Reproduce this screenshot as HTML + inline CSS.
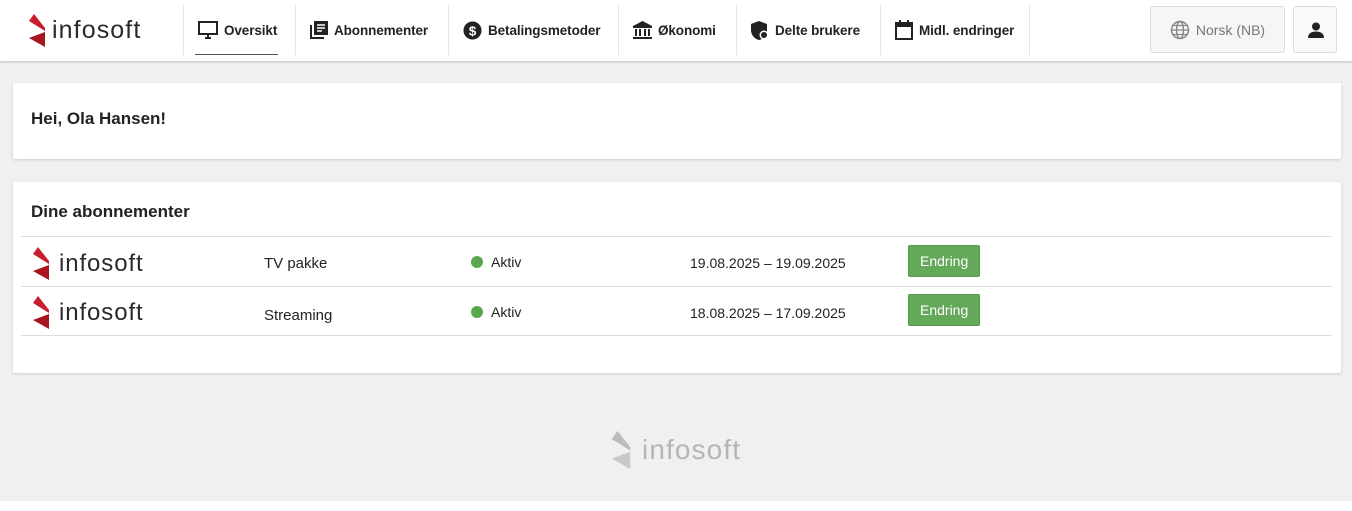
<!DOCTYPE html>
<html><head><meta charset="utf-8"><style>
*{box-sizing:border-box;margin:0;padding:0}
body{width:1352px;height:511px;background:#f0f0f0;font-family:"Liberation Sans",sans-serif;color:#222;position:relative;overflow:hidden}
.top{position:absolute;left:0;top:0;width:1352px;height:61px;background:#fff;box-shadow:0 1px 3px rgba(0,0,0,.2)}
.logo{position:absolute;display:flex;align-items:center}
.logo span{font-size:25px;color:#2a2a2a;margin-left:6px;letter-spacing:1.1px}
.nav{position:absolute;left:183px;top:5px;height:50px;display:flex}
.nav div{display:flex;align-items:center;padding-left:14px;border-right:1px solid #e6e6e6;font-size:13.5px;font-weight:bold;color:#222;height:50px;letter-spacing:-.1px;white-space:nowrap;overflow:hidden}
.nav div:first-child{border-left:1px solid #e6e6e6}
.nav svg{margin-right:6px;flex:none}
.card{position:absolute;left:13px;width:1328px;background:#fff;box-shadow:0 1px 3px rgba(0,0,0,.15);border-radius:2px}
.row{position:absolute;left:8px;width:1311px;height:50px;border-top:1px solid #ddd;font-size:15px}
.row>*{position:absolute}
.btn{background:#64a85a;color:#fff;font-size:14px;padding:7px 11px;border-radius:2px;border:1px solid #5a9a50}
.dot{width:12px;height:12px;border-radius:50%;background:#5aa74f;display:inline-block;margin-right:8px;vertical-align:-1px}
h2{position:absolute;left:18px;font-size:17px;font-weight:bold;color:#222}
</style></head><body>
<div class="top">
 <div class="logo" style="left:28px;top:14px"><svg width="18" height="33" viewBox="0 0 18 33"><path d="M1 7 L6 0 L17 14 L17 17 Z" fill="#c81e2b"/><path d="M1 24 L17 18 L17 33 Z" fill="#a8141f"/></svg><span>infosoft</span></div>
 <div class="nav">
  <div style="position:relative;width:113px"><svg width="20" height="18" viewBox="0 0 20 18"><rect x="1" y="1" width="18" height="12" fill="none" stroke="#222" stroke-width="2"/><path d="M7 17h6M10 13v4" stroke="#222" stroke-width="2"/></svg>Oversikt<i style="position:absolute;left:11px;right:17px;bottom:0;height:1px;background:#555"></i></div>
  <div style="width:153px"><svg width="18" height="18" viewBox="0 0 18 18"><path d="M1 4v13h13" stroke="#222" stroke-width="2" fill="none"/><rect x="4" y="0" width="14" height="14" fill="#222"/><path d="M7 4h8M7 7h8M7 10h5" stroke="#fff" stroke-width="1.5"/></svg>Abonnementer</div>
  <div style="width:170px"><svg width="19" height="19" viewBox="0 0 20 20"><circle cx="10" cy="10" r="9.5" fill="#222"/><text x="10" y="15" font-size="14" font-weight="bold" fill="#fff" text-anchor="middle" font-family="Liberation Sans">$</text></svg>Betalingsmetoder</div>
  <div style="width:118px"><svg width="19" height="18" viewBox="0 0 19 18"><path d="M9.5 0L0 5v2h19V5z" fill="#222"/><path d="M2 8h2v7H2zM6 8h2v7H6zM11 8h2v7h-2zM15 8h2v7h-2zM0 16h19v2H0z" fill="#222"/></svg>Økonomi</div>
  <div style="width:144px"><svg width="18" height="19" viewBox="0 0 18 19"><path d="M8 0L0 3v6c0 5 3.5 9 8 10 4.5-1 8-5 8-10V3z" fill="#222"/><circle cx="13" cy="14" r="4.5" fill="#fff"/><circle cx="13" cy="14" r="3" fill="#222"/></svg>Delte brukere</div>
  <div style="width:149px"><svg width="18" height="20" viewBox="0 0 18 20"><rect x="1" y="3" width="16" height="16" fill="none" stroke="#222" stroke-width="2"/><rect x="1" y="3" width="16" height="4" fill="#222"/><path d="M5 0v4M13 0v4" stroke="#222" stroke-width="2"/></svg>Midl. endringer</div>
 </div>
 <div style="position:absolute;left:1150px;top:6px;width:135px;height:47px;background:#f5f6f7;border:1px solid #dcdcdc;border-radius:3px;display:flex;align-items:center;justify-content:center;font-size:14px;color:#777"><svg width="20" height="20" viewBox="0 0 20 20" style="margin-right:6px"><circle cx="10" cy="10" r="8.5" fill="none" stroke="#888" stroke-width="1.5"/><ellipse cx="10" cy="10" rx="3.5" ry="8.5" fill="none" stroke="#888" stroke-width="1.5"/><path d="M1.5 10h17M3 5.5h14M3 14.5h14" stroke="#888" stroke-width="1.3"/></svg>Norsk (NB)</div>
 <div style="position:absolute;left:1293px;top:6px;width:44px;height:47px;background:#fafafa;border:1px solid #dcdcdc;border-radius:3px"><svg width="16" height="16" viewBox="0 0 16 16" style="position:absolute;left:14px;top:15px"><circle cx="8" cy="4.5" r="4" fill="#222"/><path d="M0 16c0-5 4-6.5 8-6.5s8 1.5 8 6.5z" fill="#222"/></svg></div>
</div>
<div class="card" style="top:83px;height:76px"><h2 style="top:26px">Hei, Ola Hansen!</h2></div>
<div class="card" style="top:182px;height:191px">
 <h2 style="top:20px">Dine abonnementer</h2>
 <div class="row" style="top:54px">
  <div class="logo" style="left:11px;top:10px"><svg width="18" height="33" viewBox="0 0 18 33"><path d="M1 7 L6 0 L17 14 L17 17 Z" fill="#c81e2b"/><path d="M1 24 L17 18 L17 33 Z" fill="#a8141f"/></svg><span style="font-size:24px;margin-left:9px;letter-spacing:.9px">infosoft</span></div>
  <div style="left:243px;top:18px">TV pakke</div>
  <div style="left:450px;top:17px;font-size:14px"><i class="dot"></i>Aktiv</div>
  <div style="left:669px;top:18px;font-size:14px">19.08.2025 – 19.09.2025</div>
  <div class="btn" style="left:887px;top:8px">Endring</div>
 </div>
 <div class="row" style="top:104px;border-bottom:1px solid #ddd">
  <div class="logo" style="left:11px;top:9px"><svg width="18" height="33" viewBox="0 0 18 33"><path d="M1 7 L6 0 L17 14 L17 17 Z" fill="#c81e2b"/><path d="M1 24 L17 18 L17 33 Z" fill="#a8141f"/></svg><span style="font-size:24px;margin-left:9px;letter-spacing:.9px">infosoft</span></div>
  <div style="left:243px;top:20px">Streaming</div>
  <div style="left:450px;top:17px;font-size:14px"><i class="dot"></i>Aktiv</div>
  <div style="left:669px;top:18px;font-size:14px">18.08.2025 – 17.09.2025</div>
  <div class="btn" style="left:887px;top:7px">Endring</div>
 </div>
</div>
<div class="logo" style="left:610px;top:431px"><svg width="22" height="38" viewBox="0 0 18 33"><path d="M1 7 L6 0 L17 14 L17 17 Z" fill="#bbb"/><path d="M1 24 L17 18 L17 33 Z" fill="#c8c8c8"/></svg><span style="font-size:28px;color:#b5b5b5;margin-left:10px">infosoft</span></div>
<div style="position:absolute;left:0;top:501px;width:1352px;height:10px;background:#fff"></div>
</body></html>
